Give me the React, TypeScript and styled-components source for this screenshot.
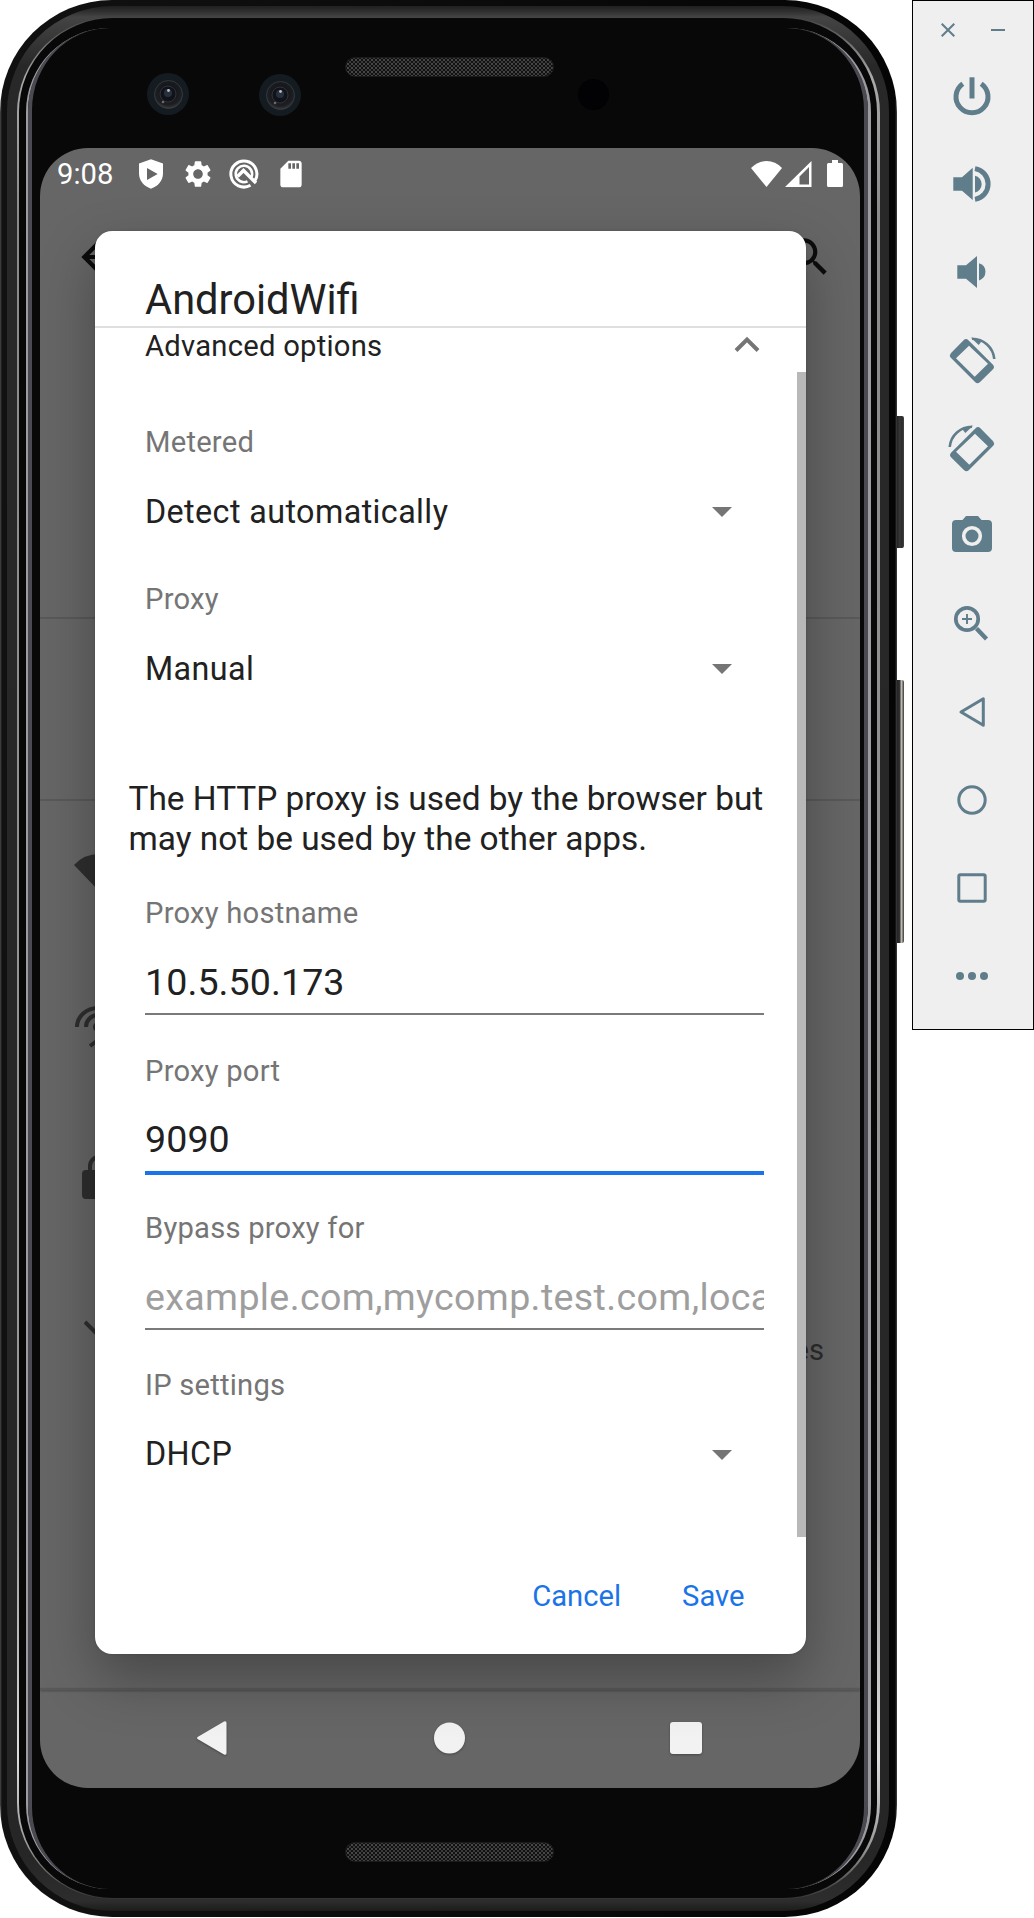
import React from "react";
import styled, { createGlobalStyle } from "styled-components";

const GlobalStyle = createGlobalStyle`
  *, *::before, *::after { box-sizing: border-box; }
  body { margin: 0; background: #fff; overflow: hidden; }
  svg { display: block; flex: none; }
`;

const Stage = styled.main`
  display: flex;
  align-items: flex-start;
  width: 1034px;
  height: 1918px;
  overflow: hidden;
  background: #fff;
  font-family: Roboto, "Liberation Sans", sans-serif;
`;

/* ---------- phone shell ---------- */

const Shell = styled.div`
  width: 897px;
  height: 1917px;
  flex: none;
  padding: 6px 8px 6px 7px;
  border-radius: 112px;
  background: linear-gradient(90deg, #4a4a4a 0, #111 2px, #0b0b0b 50%, #050505 895px, #444 897px);
`;

const Rim = styled.div`
  height: 100%;
  padding: 11px 9px 12px 10px;
  border-radius: 106px;
  background: linear-gradient(180deg, #202020 0, #2e2e2e 5px, #444 11px, #282828 60px, #262626 1850px, #2d2d2d 1895px, #1c1c1c 100%);
`;

const Chrome = styled.div`
  height: 100%;
  padding: 1px 3px 1px 2px;
  border-radius: 96px;
  background: linear-gradient(180deg, #444 0, #555 10px, #aaa 60px, #8a8a8a 200px, #999 1500px, #ddd 1740px, #999 1830px, #333 100%);
`;

const Glass = styled.div`
  height: 100%;
  padding: 10px 6px 9px 7px;
  border-radius: 94px;
  background: #080808;
`;

const Bevel = styled.div`
  height: 100%;
  border: 0 solid #9c9c9f;
  border-width: 0 3px 0 2px;
  border-radius: 84px;
`;

const Face = styled.div`
  height: 100%;
  padding: 0 4px 0 8px;
  border: 0 solid #4b4a52;
  border-width: 0 4px 0 4px;
  border-radius: 82px;
  background: #080808;
`;

const TopBezel = styled.div`
  display: flex;
  align-items: flex-start;
  height: 120px;
  padding: 29px 0 0 107px;
`;

const Lens = styled.div<{ $shift?: number }>`
  width: 42px;
  height: 42px;
  margin-right: 70px;
  margin-top: ${(p) => 16 + (p.$shift ?? 0)}px;
  & + & { margin-right: 44px; }
`;

const Grille = styled.div`
  width: 209px;
  height: 20px;
  border: 1px solid #1b1b1b;
  border-radius: 10px;
  background-color: #111;
  background-image: radial-gradient(circle, #484848 0.7px, transparent 1.2px),
    radial-gradient(circle, #3c3c3c 0.7px, transparent 1.2px);
  background-size: 4px 4px;
  background-position: 0 0, 2px 2px;
`;

const Sensor = styled.div`
  width: 31px;
  height: 31px;
  margin: 22px 0 0 24px;
  border-radius: 50%;
  background: #020103;
`;

const BottomBezel = styled.div`
  display: flex;
  padding: 54px 0 0 305px;
`;

const SideKeys = styled.div`
  display: flex;
  flex-direction: column;
  gap: 132px;
  width: 7px;
  padding-top: 416px;
`;

const SideKey = styled.div<{ $height: number; $lit?: boolean }>`
  height: ${(p) => p.$height}px;
  border-radius: 0 2px 2px 0;
  background: ${(p) =>
    p.$lit
      ? "linear-gradient(90deg, #222 0, #333 3px, #bdb9b5 4px, #bdb9b5 5px, #55504c 6px)"
      : "linear-gradient(90deg, #222 0, #383838 3px, #2a2a2a 5px, #444 7px)"};
`;

/* ---------- device screen ---------- */

const Screen = styled.div`
  position: relative;
  display: flex;
  flex-direction: column;
  width: 820px;
  height: 1640px;
  border-radius: 48px;
  overflow: hidden;
  background: #666;
`;

const StatusBar = styled.div`
  display: flex;
  align-items: center;
  height: 51px;
  flex: none;
  padding: 0 17px;
  color: #fff;
`;

const Clock = styled.span`
  width: 78px;
  font-size: 29.2px;
  line-height: 34px;
`;

const Notifications = styled.div`
  display: flex;
  flex: 1;
  gap: 14.5px;
`;

const Signals = styled.div`
  display: flex;
  align-items: center;
  svg + svg { margin-left: 3px; }
  svg + svg + svg { margin-left: 15px; }
`;

const AppBar = styled.div`
  display: flex;
  justify-content: space-between;
  height: 118px;
  flex: none;
  padding: 33px 26px 0 33px;
`;

const Section = styled.div<{ $height: number; $rule?: boolean }>`
  height: ${(p) => p.$height}px;
  flex: none;
  border-bottom: ${(p) => (p.$rule ? "2px solid #595959" : "0")};
`;

const ListRow = styled.div<{ $height: number; $top: number; $left: number }>`
  display: flex;
  justify-content: space-between;
  height: ${(p) => p.$height}px;
  flex: none;
  padding: ${(p) => p.$top}px 36px 0 ${(p) => p.$left}px;
  color: #2e2e2e;
`;

const RowTail = styled.span`
  padding-top: 13px;
  font-size: 29.2px;
  line-height: 34px;
  color: #2c2c2c;
`;

const NavBar = styled.div`
  display: flex;
  align-items: flex-start;
  justify-content: space-between;
  height: 100px;
  margin-top: auto;
  flex: none;
  padding: 31px 158px 0 157px;
  border-top: 2px solid #595959;
  filter: drop-shadow(0 1px 1px rgba(0, 0, 0, 0.3));
`;

/* ---------- dialog ---------- */

const Dialog = styled.section`
  position: absolute;
  left: 55px;
  top: 83px;
  display: flex;
  flex-direction: column;
  width: 710.5px;
  height: 1423px;
  border-radius: 17px;
  background: #fff;
  box-shadow: 0 24px 56px rgba(0, 0, 0, 0.3), 0 0 3px rgba(0, 0, 0, 0.15);
  color: #212121;
`;

const DialogHeader = styled.header`
  height: 97px;
  flex: none;
  padding: 45px 50px 0;
  border-bottom: 2px solid #dfdfdf;
`;

const Title = styled.h1`
  margin: 0;
  font-size: 41.6px;
  font-weight: 400;
  line-height: 48px;
`;

const DialogBody = styled.div`
  position: relative;
  height: 1209px;
  flex: none;
  padding: 1px 42px 0 50px;
  overflow: hidden;
`;

const ScrollThumb = styled.div`
  position: absolute;
  right: 0;
  top: 44px;
  width: 8.5px;
  height: 1165px;
  background: #b8b8b8;
`;

const Expander = styled.div`
  display: flex;
  justify-content: space-between;
  height: 96px;
  padding-right: 4px;
  font-size: 29.2px;
  line-height: 34px;
  letter-spacing: 0.25px;
`;

const Field = styled.div`
  width: 618.5px;
  height: 157.2px;
`;

const Label = styled.div`
  font-size: 29.2px;
  line-height: 34px;
  letter-spacing: 0.22px;
  color: #757575;
`;

const Select = styled.div`
  display: flex;
  align-items: center;
  justify-content: space-between;
  margin-top: 28.5px;
  padding-right: 31.5px;
  font-size: 32.3px;
  line-height: 49px;
  letter-spacing: 0.4px;
`;

const Input = styled.div<{ $focused?: boolean; $hint?: boolean }>`
  height: ${(p) => (p.$focused ? 60 : 57)}px;
  margin-top: 27.8px;
  border-bottom: ${(p) => (p.$focused ? "4px solid #1a73e8" : "2px solid #7a7a7a")};
  overflow: hidden;
  white-space: nowrap;
  font-size: 37.6px;
  line-height: 48px;
  letter-spacing: ${(p) => (p.$hint ? "0.36px" : "0.08px")};
  color: ${(p) => (p.$hint ? "#9e9e9e" : "#212121")};
`;

const Note = styled.p`
  height: 117px;
  margin: 40px 0 0 -16.5px;
  white-space: nowrap;
  font-size: 33.4px;
  line-height: 39.4px;
`;

const Actions = styled.footer`
  display: flex;
  justify-content: flex-end;
  gap: 61px;
  padding: 42px 61px 0 0;
`;

const Action = styled.button`
  padding: 0;
  border: 0;
  background: none;
  font: 400 29.2px/34px Roboto, "Liberation Sans", sans-serif;
  color: #1a73e8;
`;

/* ---------- emulator toolbar ---------- */

const Toolbar = styled.aside`
  width: 122px;
  height: 1030px;
  flex: none;
  margin-left: 8px;
  border: 1px solid #000;
  background: #efefef;
`;

const WindowControls = styled.div`
  display: flex;
  gap: 36px;
  height: 51px;
  padding: 22px 0 0 28px;
`;

const Tool = styled.div`
  display: flex;
  align-items: center;
  justify-content: center;
  height: 88px;
  padding-right: 2px;
`;

const TINT = "#607d8b";

const ToolIcon = ({ children }: { children: React.ReactNode }) => (
  <Tool>
    <svg width="48" height="48" viewBox="0 0 48 48" fill={TINT}>
      {children}
    </svg>
  </Tool>
);

const RotateShape = () => (
  <>
    <path
      fillRule="evenodd"
      d="M15.6 4.2Q18 2 20.4 4.2L45 28.7Q47 31 45 33.3L31.8 46.3Q29.5 48 27.3 46.3L2.8 21.7Q1 19.5 2.8 17.2ZM21 9.7L8 22.3L26.7 40.7L40 27.7Z"
    />
    <path d="M24 2.8A22.3 22.3 0 0 1 46.3 23" fill="none" stroke={TINT} strokeWidth="2.6" />
    <path d="M22.7 1.4L30.7 9L34.2 4.6Z" />
  </>
);

const LensArt = () => (
  <svg width="42" height="42" viewBox="0 0 42 42">
    <defs>
      <radialGradient id="iris" cx="0.5" cy="0.4" r="0.6">
        <stop offset="0" stopColor="#454552" />
        <stop offset="0.35" stopColor="#15151b" />
        <stop offset="0.8" stopColor="#1d1f22" />
        <stop offset="1" stopColor="#3a3d40" />
      </radialGradient>
    </defs>
    <circle cx="21" cy="21" r="21" fill="#141c22" />
    <circle cx="21.5" cy="21.5" r="14" fill="url(#iris)" stroke="#3a3d41" strokeWidth="0.8" />
    <circle cx="21" cy="21" r="8" fill="#10141a" stroke="#303339" />
    <circle cx="21" cy="20" r="4" fill="#2a303b" />
    <circle cx="21.5" cy="17.5" r="1.4" fill="#b9bccb" />
    <circle cx="16" cy="29" r="1.3" fill="#75656a" />
  </svg>
);

const Caret = () => (
  <svg width="20" height="10" viewBox="0 0 20 10">
    <path d="M0 0H20L10 10Z" fill="#757575" />
  </svg>
);

export default function App() {
  return (
    <>
      <GlobalStyle />
      <Stage>
        <Shell>
          <Rim>
            <Chrome>
              <Glass>
                <Bevel>
                  <Face>
                    <TopBezel>
                      <Lens><LensArt /></Lens>
                      <Lens $shift={1}><LensArt /></Lens>
                      <Grille />
                      <Sensor />
                    </TopBezel>
                    <Screen>
                      <StatusBar>
                        <Clock>9:08</Clock>
                        <Notifications>
                          <svg width="32" height="32" viewBox="0 0 24 24" fill="#fff">
                            <path fillRule="evenodd" d="M12 1L3 4.2v7.3C3 17 6.6 21.300 12 23c5.400-1.700 9-6 9-11.500V4.200zM9 7.500L17 12L9 16.500z" />
                          </svg>
                          <svg width="32" height="32" viewBox="0 0 24 24" fill="#fff">
                            <path d="M19.140 12.940c.04-.3.06-.61.06-.94 0-.32-.02-.64-.07-.94l2.030-1.580c.18-.14.23-.41.12-.61l-1.920-3.320c-.12-.22-.37-.29-.59-.22l-2.390.96c-.5-.38-1.030-.7-1.620-.94l-.36-2.540c-.04-.24-.24-.41-.48-.41h-3.840c-.24 0-.43.17-.47.41l-.36 2.540c-.59.24-1.130.57-1.620.94l-2.390-.96c-.22-.08-.47 0-.59.22L2.740 8.870c-.12.21-.08.47.12.61l2.030 1.580c-.05.3-.09.63-.09.94s.02.64.07.94l-2.030 1.580c-.18.14-.23.41-.12.61l1.920 3.320c.12.22.37.29.59.22l2.390-.96c.5.38 1.030.7 1.620.94l.36 2.540c.05.24.24.41.48.41h3.840c.24 0 .44-.17.47-.41l.36-2.540c.59-.24 1.130-.56 1.620-.94l2.390.96c.22.08.47 0 .59-.22l1.920-3.320c.12-.22.07-.47-.12-.61l-2.010-1.580zM12 15.600c-1.980 0-3.600-1.620-3.600-3.600s1.620-3.600 3.600-3.600 3.600 1.620 3.600 3.600-1.620 3.600-3.600 3.600z" />
                          </svg>
                          <svg width="32" height="32" viewBox="0 0 32 32" fill="none" stroke="#fff">
                            <path d="M22.500 27.200A13 13 0 1 1 26.700 23.200" strokeWidth="3" />
                            <path d="M19.500 23.300A8.200 8.200 0 1 1 23.500 19" strokeWidth="2.600" />
                            <path d="M9.500 18.500L15.500 12.500L28 25" strokeWidth="3.400" />
                          </svg>
                          <svg width="32" height="32" viewBox="0 0 24 24" fill="#fff">
                            <path d="M18 2h-8L4.020 8 4 20c0 1.100.9 2 2 2h12c1.100 0 2-.9 2-2V4c0-1.100-.9-2-2-2zm-6 6h-2V4h2v4zm3 0h-2V4h2v4zm3 0h-2V4h2v4z" />
                          </svg>
                        </Notifications>
                        <Signals>
                          <svg width="31" height="26" viewBox="0 0 31 26" fill="#fff">
                            <path d="M15.500 26L0 7Q6.500 0 15.500 0T31 7Z" />
                          </svg>
                          <svg width="27" height="26" viewBox="0 0 27 26" fill="#fff">
                            <path fillRule="evenodd" d="M26.500 0V26H0ZM24 6L14.500 15.500V23.500H24Z" />
                          </svg>
                          <svg width="16" height="27" viewBox="0 0 16 27" fill="#fff">
                            <path d="M5 0H11V3H14.500Q16 3 16 4.500V25.500Q16 27 14.500 27H1.500Q0 27 0 25.500V4.500Q0 3 1.500 3H5Z" />
                          </svg>
                        </Signals>
                      </StatusBar>
                      <AppBar>
                        <svg width="50" height="50" viewBox="0 0 24 24" fill="#0c0c0c">
                          <path d="M20 11H7.830l5.590-5.590L12 4l-8 8 8 8 1.410-1.410L7.830 13H20v-2z" />
                        </svg>
                        <svg width="50" height="50" viewBox="0 0 24 24" fill="#0c0c0c">
                          <path d="M15.500 14h-.79l-.28-.27C15.410 12.590 16 11.110 16 9.500 16 5.910 13.090 3 9.500 3S3 5.910 3 9.500 5.910 16 9.500 16c1.610 0 3.090-.59 4.230-1.570l.27.28v.79l5 4.990L20.490 19l-4.990-5zm-6 0C7.010 14 5 11.990 5 9.500S7.010 5 9.500 5 14 7.010 14 9.500 11.990 14 9.500 14z" />
                        </svg>
                      </AppBar>
                      <Section $height={302} $rule />
                      <Section $height={182} $rule />
                      <ListRow $height={150} $top={53} $left={34}>
                        <svg width="50" height="40" viewBox="0 0 50 40" fill="currentColor">
                          <path d="M25 37L0 11Q10 0 25 0T50 11Z" />
                        </svg>
                      </ListRow>
                      <ListRow $height={150} $top={53} $left={35}>
                        <svg width="46" height="48" viewBox="0 0 46 48" fill="none" stroke="currentColor" strokeWidth="4">
                          <path d="M2 23A21 19 0 0 1 44 23M11 23A12 12 0 0 1 35 23M15 42L26 34" />
                          <circle cx="23" cy="23" r="3" fill="currentColor" />
                        </svg>
                      </ListRow>
                      <ListRow $height={155} $top={54} $left={42}>
                        <svg width="34" height="44" viewBox="0 0 34 44">
                          <path d="M8 16V11A9 9 0 0 1 26 11V16" fill="none" stroke="currentColor" strokeWidth="4" />
                          <rect y="15" width="34" height="29" rx="4" fill="currentColor" />
                        </svg>
                      </ListRow>
                      <ListRow $height={120} $top={64} $left={44}>
                        <svg width="26" height="16" viewBox="0 0 26 16" fill="none" stroke="currentColor" strokeWidth="4">
                          <path d="M1 2L13 14L25 2" />
                        </svg>
                        <RowTail>es</RowTail>
                      </ListRow>
                      <NavBar>
                        <svg width="32" height="34" viewBox="0 0 32 34" fill="#f2f2f2">
                          <path d="M27 .5Q29.500 -.5 29.500 2V32Q29.500 34.500 27 33.500L1 18.300Q-1 17 1 15.700Z" />
                        </svg>
                        <svg width="31" height="33" viewBox="0 0 31 33" fill="#f2f2f2">
                          <circle cx="15.500" cy="17" r="15.500" />
                        </svg>
                        <svg width="32" height="33" viewBox="0 0 32 33" fill="#f2f2f2">
                          <rect y="1" width="32" height="32" rx="3" />
                        </svg>
                      </NavBar>

                      <Dialog>
                        <DialogHeader>
                          <Title>AndroidWifi</Title>
                        </DialogHeader>
                        <DialogBody>
                          <Expander>
                            <span>Advanced options</span>
                            <svg width="26" height="34" viewBox="0 0 26 34" fill="none" stroke="#757575" strokeWidth="4">
                              <path d="M2 21.500L13 10.500L24 21.500" />
                            </svg>
                          </Expander>
                          <Field>
                            <Label>Metered</Label>
                            <Select>Detect automatically<Caret /></Select>
                          </Field>
                          <Field>
                            <Label>Proxy</Label>
                            <Select>Manual<Caret /></Select>
                          </Field>
                          <Note>
                            The HTTP proxy is used by the browser but
                            <br />
                            may not be used by the other apps.
                          </Note>
                          <Field>
                            <Label>Proxy hostname</Label>
                            <Input>10.5.50.173</Input>
                          </Field>
                          <Field>
                            <Label>Proxy port</Label>
                            <Input $focused>9090</Input>
                          </Field>
                          <Field>
                            <Label>Bypass proxy for</Label>
                            <Input $hint>example.com,mycomp.test.com,loca</Input>
                          </Field>
                          <Field>
                            <Label>IP settings</Label>
                            <Select>DHCP<Caret /></Select>
                          </Field>
                          <ScrollThumb />
                        </DialogBody>
                        <Actions>
                          <Action>Cancel</Action>
                          <Action>Save</Action>
                        </Actions>
                      </Dialog>
                    </Screen>
                    <BottomBezel>
                      <Grille />
                    </BottomBezel>
                  </Face>
                </Bevel>
              </Glass>
            </Chrome>
          </Rim>
        </Shell>
        <SideKeys>
          <SideKey $height={132} />
          <SideKey $height={263} $lit />
        </SideKeys>
        <Toolbar>
          <WindowControls>
            <svg width="14" height="14" viewBox="0 0 14 14" fill="none" stroke={TINT} strokeWidth="2">
              <path d="M.7 .7L13.300 13.300M13.300 .7L.7 13.300" />
            </svg>
            <svg width="14" height="14" viewBox="0 0 14 14" fill={TINT}>
              <path d="M0 6H14V8H0Z" />
            </svg>
          </WindowControls>
          <ToolIcon>
            <path d="M14.800 11.700A16 16 0 1 0 33.200 11.700" fill="none" stroke={TINT} strokeWidth="5" />
            <path d="M21.500 5.300H26.500V26.500H21.500Z" />
          </ToolIcon>
          <ToolIcon>
            <path d="M5.300 17.300H14L24.700 7.700V40L14 30.700H5.300Z" />
            <path d="M27 15.800A8.500 8.500 0 0 1 27 32.400Z" />
            <path d="M27 8.600A15.600 15.600 0 0 1 27 39.400" fill="none" stroke={TINT} strokeWidth="5" />
          </ToolIcon>
          <ToolIcon>
            <path d="M9.300 17.300H18L29 8V40L18 30.700H9.300Z" />
            <path d="M31 15.300A8.900 8.900 0 0 1 31 32.400Z" />
          </ToolIcon>
          <ToolIcon><RotateShape /></ToolIcon>
          <ToolIcon>
            <g transform="matrix(-1 0 0 1 48 0)"><RotateShape /></g>
          </ToolIcon>
          <ToolIcon>
            <path d="M8 8H14.500L18 4H30L33.500 8H40Q44 8 44 12V36Q44 40 40 40H8Q4 40 4 36V12Q4 8 8 8Z" />
            <circle cx="24" cy="24" r="8.300" fill="none" stroke="#efefef" strokeWidth="3.600" />
          </ToolIcon>
          <ToolIcon>
            <g fill="none" stroke={TINT}>
              <circle cx="19" cy="19" r="11.200" strokeWidth="3.700" />
              <path d="M14 19H24M19 14V24" strokeWidth="1.900" />
              <path d="M28.500 28.500L38.500 39" strokeWidth="4.400" />
            </g>
          </ToolIcon>
          <ToolIcon>
            <path d="M13 24L35.300 10.800V37.200Z" fill="none" stroke={TINT} strokeWidth="3" strokeLinejoin="round" />
          </ToolIcon>
          <ToolIcon>
            <circle cx="24" cy="24" r="13.200" fill="none" stroke={TINT} strokeWidth="3" />
          </ToolIcon>
          <ToolIcon>
            <rect x="10.800" y="10.800" width="26.400" height="26.400" rx="1.500" fill="none" stroke={TINT} strokeWidth="3" />
          </ToolIcon>
          <ToolIcon>
            <circle cx="12" cy="24" r="4" />
            <circle cx="24" cy="24" r="4" />
            <circle cx="36" cy="24" r="4" />
          </ToolIcon>
        </Toolbar>
      </Stage>
    </>
  );
}
